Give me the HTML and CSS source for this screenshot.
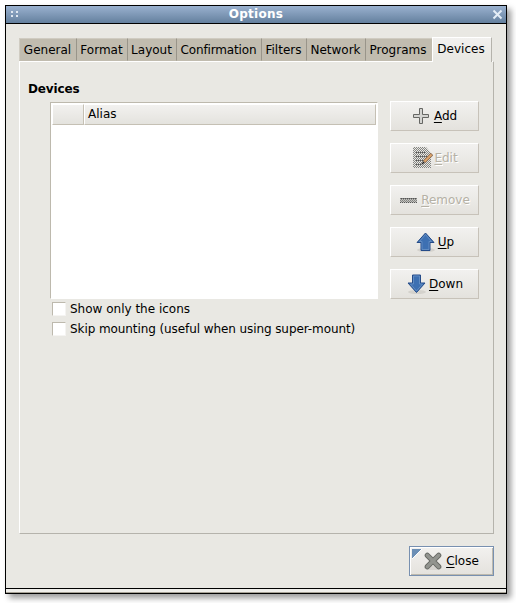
FILE: index.html
```html
<!DOCTYPE html>
<html lang="en">
<head>
<meta charset="utf-8">
<title>Options</title>
<link rel="stylesheet" href="styles.css">
</head>
<body>
<div class="window">
  <header class="titlebar">
    <svg class="grip" width="9" height="7" shape-rendering="crispEdges" fill="#dfe7f0"><path d="M0 0h2v2H0zM5 0h2v2H5zM0 4h2v2H0zM5 4h2v2H5z"/></svg>
    <span class="title">Options</span>
    <svg class="dismiss" width="11" height="11" viewBox="0 0 11 11"><path d="M1.500 1.500l8 8M9.500 1.500l-8 8" stroke="#e4edf6" stroke-width="2"/></svg>
  </header>
  <main class="content">
    <nav class="tabs">
      <span class="tab">General</span><span class="tab">Format</span><span class="tab">Layout</span><span class="tab">Confirmation</span><span class="tab">Filters</span><span class="tab">Network</span><span class="tab">Programs</span><span class="tab active">Devices</span>
    </nav>
    <section class="panel">
      <h1 class="heading">Devices</h1>
      <div class="columns">
        <div class="left">
          <div class="list"><div class="list-head"><span class="col"></span><span class="col">Alias</span></div></div>
          <label class="check"><span class="box"></span><span class="t">Show only the icons</span></label>
          <label class="check"><span class="box"></span><span class="t long">Skip mounting (useful when using super-mount)</span></label>
        </div>
        <div class="buttons">
          <button class="btn"><svg width="16" height="16" viewBox="0 0 16 16"><path d="M6.500.5h3v6h6v3h-6v6h-3v-6h-6v-3h6z" fill="#d4d4d1" stroke="#666764"/></svg><span class="t add"><u>A</u>dd</span></button>
          <button class="btn off"><svg class="edit" width="21" height="22" viewBox="0 0 21 22"><defs><pattern id="dither" width="2" height="2" patternUnits="userSpaceOnUse"><path d="M0 0h1v1H0zM1 1h1v1H1z" fill="#858582" shape-rendering="crispEdges"/></pattern></defs><path d="M1 0h13l5 6v15H1z" fill="#e9e9e5"/><path d="M1 0h13l5 6v15H1z" fill="url(#dither)"/><path d="M4 5.500h9M4 9.500h11M4 13.500h8M4 17.500h6" stroke="#555" stroke-dasharray="1 1"/><path d="M12 15l8-8" stroke="#8a6b50" stroke-width="3.500"/><path d="M12.500 14.500l7-7" stroke="#e0a66c" stroke-width="1.800"/><path d="M10 17l2-2" stroke="#222" stroke-width="1.500"/></svg><span class="t"><u>E</u>dit</span></button>
          <button class="btn off"><svg class="minus" width="17" height="5" viewBox="0 0 17 5" shape-rendering="crispEdges"><path d="M1 0h16v5H0V1z" fill="#c3c3bf"/><path d="M0 0h17v5H0z" fill="url(#dither)"/><path d="M1 .5h16M0 4.500h17" stroke="#555" stroke-dasharray="1 1"/></svg><span class="t remove"><u>R</u>emove</span></button>
          <button class="btn"><svg width="20" height="20" viewBox="0 0 20 20"><ellipse cx="10" cy="18" rx="9" ry="2" fill="#d4d2cd"/><path d="M9.500 1L18 10.500h-4v8H5v-8H1z" fill="#3d70b2" stroke="#254b88"/><path d="M9.500 2.500L15.500 9.500H13v8H6v-8H3.500z" fill="none" stroke="#6993c7" stroke-width=".8"/></svg><span class="t up"><u>U</u>p</span></button>
          <button class="btn"><svg width="20" height="20" viewBox="0 0 20 20"><ellipse cx="10" cy="18" rx="9" ry="2" fill="#d4d2cd"/><path d="M5.500 1h8v8H18L9.500 18.500 1 9h4.500z" fill="#3d70b2" stroke="#254b88"/><path d="M6.500 2h6v8h3L9.500 17l-6-7h3z" fill="none" stroke="#6993c7" stroke-width=".8"/></svg><span class="t down"><u>D</u>own</span></button>
        </div>
      </div>
    </section>
    <button class="btn close"><svg width="18" height="18" viewBox="0 0 18 18"><ellipse cx="9" cy="16" rx="9" ry="2" fill="#d6d4d0"/><path d="M3.300 3.300l11.400 11.400M14.700 3.300L3.300 14.700" stroke="#666863" stroke-width="5.200" stroke-linecap="round"/><path d="M3.300 3.300l11.400 11.400M14.700 3.300L3.300 14.700" stroke="#92948f" stroke-width="3.400" stroke-linecap="round"/></svg><span class="t"><u>C</u>lose</span></button>
  </main>
  <footer class="resize"></footer>
</div>
</body>
</html>
```

FILE: styles.css
```css
* { box-sizing: border-box; }
body { margin: 0; background: #fff; font: 12px/16px "DejaVu Sans", sans-serif; color: #000; height: 603px; overflow: hidden; padding: 5px; }
svg { display: block; flex: none; }
.window { width: 502px; height: 589px; border: 1px solid #000; background: #e9e8e3; box-shadow: 4px 4px 6px rgba(0,0,0,.4); display: flex; flex-direction: column; }
.titlebar { height: 18px; flex: none; border-bottom: 1px solid #000; background: linear-gradient(#9ab1cf, #64809e); display: flex; align-items: center; justify-content: space-between; padding: 0 3px 0 5px; }
.title { color: #fff; font-weight: bold; line-height: 17px; letter-spacing: .25px; }
.content { flex: 1; padding: 13px 12px 0; display: flex; flex-direction: column; }
.tabs { height: 24px; padding-left: 1px; display: grid; grid-template-columns: 58px 51px 49px 85px 45px 59px 66px 60px; align-items: end; }
.tab { height: 23px; background: #c1bcaf; border-top: 1px solid #d0ccc2; border-right: 1px solid #99958a; border-bottom: 1px solid #c1bcaf; line-height: 23px; text-align: center; white-space: nowrap; padding-right: 1px; }
.tab:first-child { border-left: 1px solid #d0ccc2; }
.tab:nth-child(4) { letter-spacing: -.15px; }
.tab:nth-child(7) { border-right: 0; padding-right: 2px; }
.tab.active { position: relative; height: 25px; margin-bottom: -1px; padding-right: 2px; background: linear-gradient(#f2f1ef, #e9e8e3 80%); border: 1px solid #fff; border-right-color: #b5b3ac; border-bottom: 0; line-height: 23px; }
.panel { height: 473px; margin-left: 1px; width: 475px; border: 1px solid #fff; border-right-color: #b5b3ac; border-bottom-color: #b5b3ac; padding: 19px 14px 0 8px; }
.heading { margin: 0; font-size: 12px; line-height: 16px; letter-spacing: -.15px; }
.columns { display: flex; justify-content: space-between; padding: 5px 0 0 22px; }
.left { width: 328px; }
.list { height: 197px; background: #fff; border: 1px solid #bdb9ad; border-right-color: #fff; border-bottom-color: #fff; padding: 1px; }
.list-head { display: flex; height: 21px; }
.col { border: 1px solid #fff; border-right-color: #c5c0b4; border-bottom-color: #c5c0b4; background: linear-gradient(#f2f1ef, #e4e3de); line-height: 19px; padding-left: 3px; width: 32px; }
.col + .col { flex: 1; }
.check { display: flex; align-items: center; height: 20px; gap: 4px; padding-left: 2px; white-space: nowrap; }
.long { letter-spacing: -.085px; }
.box { width: 14px; height: 14px; background: #fff; border: 1px solid #bdb9ad; border-right-color: #f5f4f2; border-bottom-color: #f5f4f2; }
.buttons { display: flex; flex-direction: column; gap: 12px; margin-top: -1px; }
.btn { width: 89px; height: 30px; border: 1px solid #fff; border-right-color: #c7c2b9; border-bottom-color: #c7c2b9; background: linear-gradient(#f2f1ef, #e4e2dd); font: inherit; color: #000; padding: 0 0 0 1px; display: flex; align-items: center; justify-content: center; gap: 3px; }
.btn u { text-underline-offset: 2px; text-decoration-thickness: 1px; }
.add { margin-left: 2px; }
.off { color: #b5b1a5; text-shadow: 1px 1px #fff; gap: 1px; }
.remove { margin-left: 3px; }
.up { margin-left: -1px; }
.down { margin-left: -1px; }
.close { width: 85px; align-self: flex-end; margin-top: 12px; padding: 0; border: 1px solid #7890b0; box-shadow: inset 1px 1px #fff, inset -1px -1px #bdb9ad; background: linear-gradient(135deg, #6c8fb5 0 6.500px, #fff 7px, transparent 7.500px) 2px 2px / 10px 10px no-repeat, linear-gradient(#f2f1ef, #e4e2dd); gap: 4px; }
.resize { height: 5px; flex: none; border-top: 1px solid #000; border-bottom: 1px solid #a7a296; background: #efeeea; }
```
